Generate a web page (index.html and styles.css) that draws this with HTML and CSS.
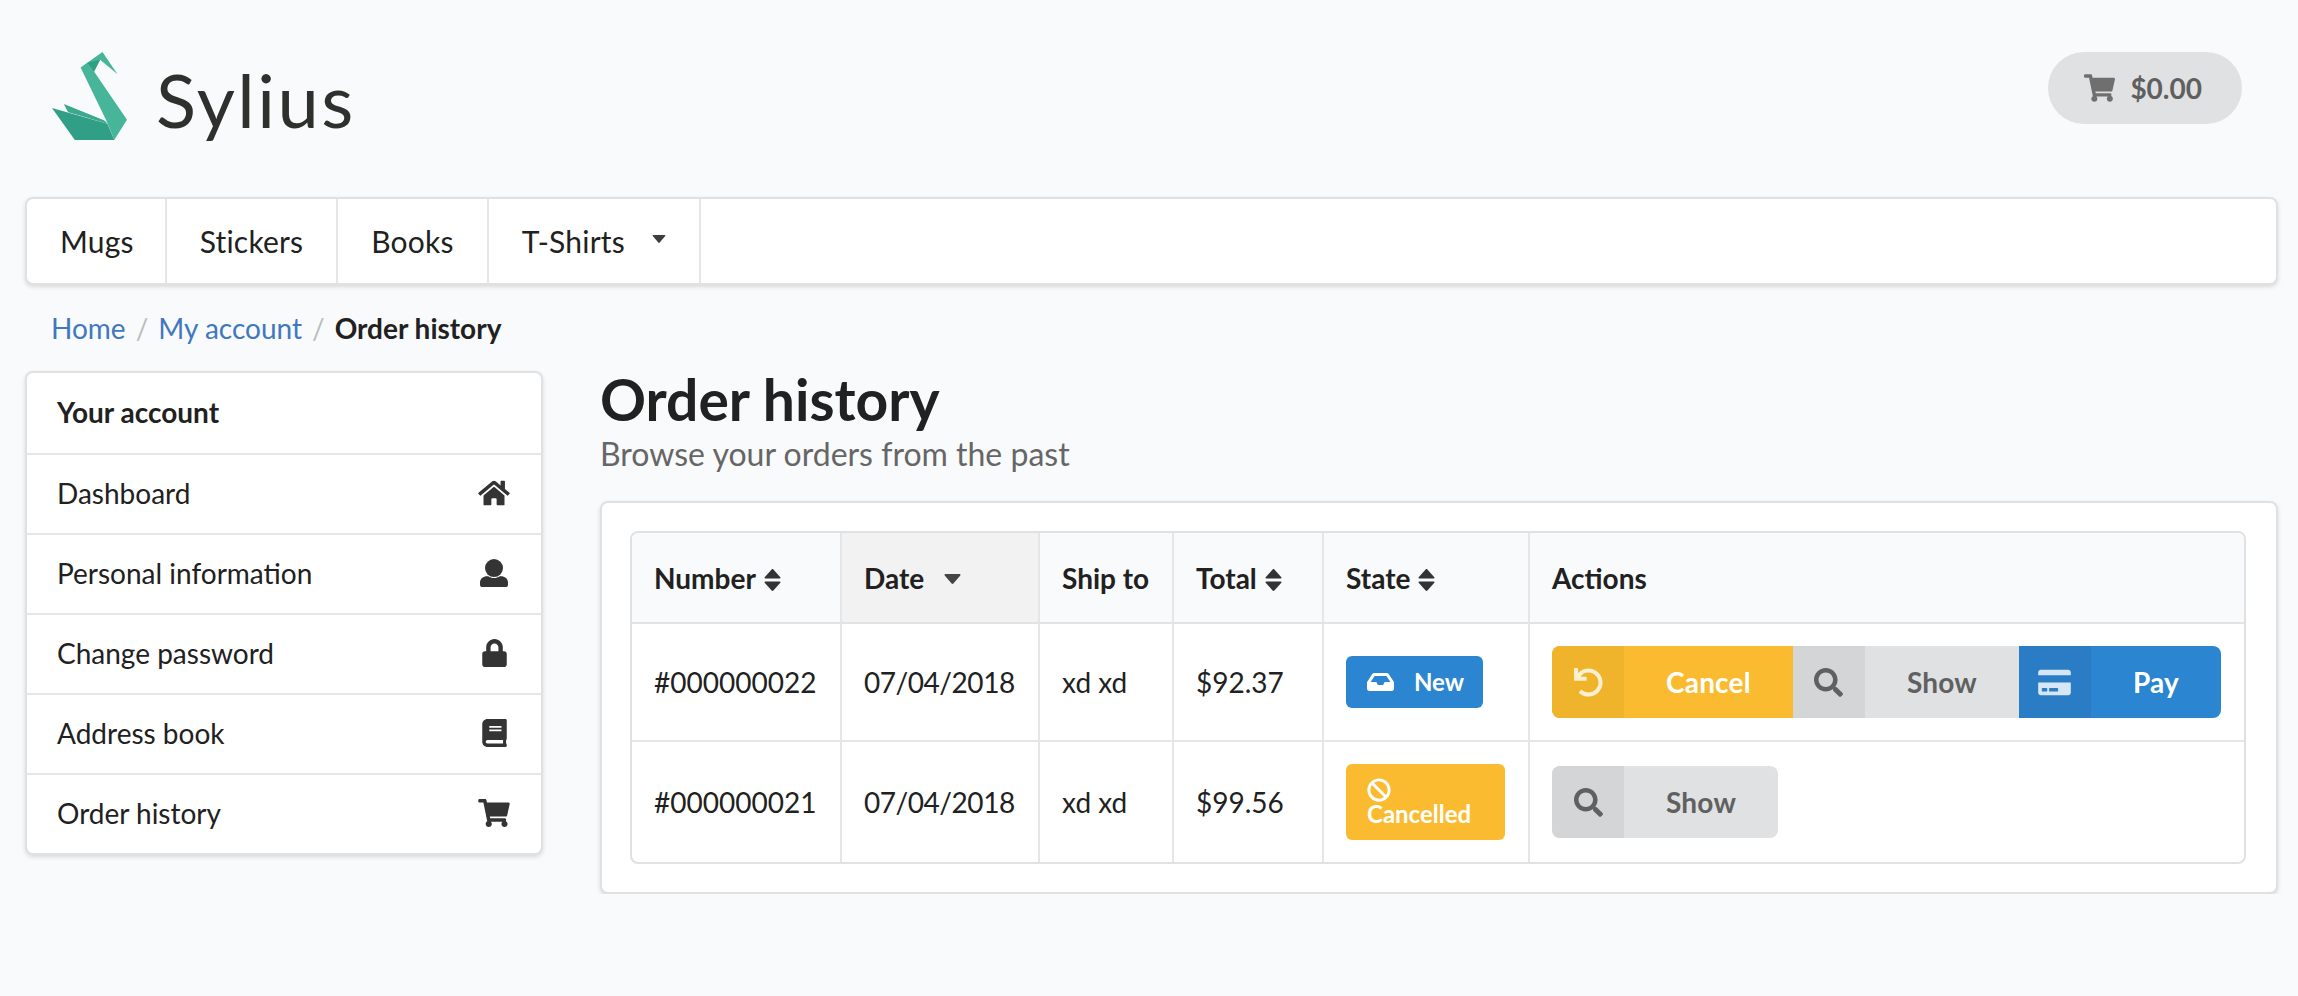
FILE: index.html
```html
<!DOCTYPE html>
<html lang="en">
<head>
<meta charset="utf-8">
<title>Order history</title>
<link rel="stylesheet" href="styles.css">
</head>
<body>
<svg class="sprite" aria-hidden="true">
<symbol id="i-home" viewBox="0 0 576 512"><path d="M280.37 148.26L96 300.11V464a16 16 0 0 0 16 16l112.06-.29a16 16 0 0 0 15.92-16V368a16 16 0 0 1 16-16h64a16 16 0 0 1 16 16v95.64a16 16 0 0 0 16 16.05L464 480a16 16 0 0 0 16-16V300L295.67 148.26a12.19 12.19 0 0 0-15.3 0zM571.6 251.47L488 182.56V44.05a12 12 0 0 0-12-12h-56a12 12 0 0 0-12 12v72.61L318.47 43a48 48 0 0 0-61 0L4.34 251.47a12 12 0 0 0-1.6 16.9l25.5 31A12 12 0 0 0 45.15 301l235.22-193.74a12.19 12.19 0 0 1 15.3 0L530.9 301a12 12 0 0 0 16.9-1.6l25.5-31a12 12 0 0 0-1.7-16.93z"/></symbol>
<symbol id="i-user" viewBox="0 0 512 512"><circle cx="256" cy="165" r="165"/><path d="M0 430c0-70 60-115 130-115h20c30 20 66 32 106 32s76-12 106-32h20c70 0 130 45 130 115v34a48 48 0 0 1-48 48H48a48 48 0 0 1-48-48z"/></symbol>
<symbol id="i-lock" viewBox="0 0 448 512"><path d="M400 224h-24v-72C376 68.2 307.8 0 224 0S72 68.2 72 152v72H48c-26.5 0-48 21.5-48 48v192c0 26.5 21.5 48 48 48h352c26.5 0 48-21.5 48-48V272c0-26.5-21.5-48-48-48zm-104 0H152v-72c0-39.7 32.3-72 72-72s72 32.3 72 72v72z"/></symbol>
<symbol id="i-book" viewBox="0 0 448 512"><path d="M448 360V24c0-13.3-10.7-24-24-24H96C43 0 0 43 0 96v320c0 53 43 96 96 96h328c13.3 0 24-10.7 24-24v-16c0-7.5-3.5-14.3-8.9-18.7-4.2-15.4-4.2-59.3 0-74.7 5.4-4.3 8.9-11.1 8.9-18.6zM128 134c0-3.3 2.7-6 6-6h212c3.3 0 6 2.7 6 6v20c0 3.3-2.7 6-6 6H134c-3.3 0-6-2.7-6-6v-20zm0 64c0-3.3 2.7-6 6-6h212c3.3 0 6 2.7 6 6v20c0 3.3-2.7 6-6 6H134c-3.3 0-6-2.7-6-6v-20zm253.4 250H96c-17.7 0-32-14.3-32-32 0-17.6 14.4-32 32-32h285.4c-1.9 17.1-1.9 46.9 0 64z"/></symbol>
<symbol id="i-cart" viewBox="0 0 576 512"><path d="M528.12 301.319l47.273-208C578.806 78.301 567.391 64 551.99 64H159.208l-9.166-44.81C147.758 8.021 137.93 0 126.529 0H24C10.745 0 0 10.745 0 24v16c0 13.255 10.745 24 24 24h69.883l70.248 343.435C147.325 417.1 136 435.222 136 456c0 30.928 25.072 56 56 56s56-25.072 56-56c0-15.674-6.447-29.835-16.824-40h209.647C430.447 426.165 424 440.326 424 456c0 30.928 25.072 56 56 56s56-25.072 56-56c0-22.172-12.888-41.332-31.579-50.405l5.517-24.276c3.413-15.018-8.002-29.319-23.403-29.319H218.117l-6.545-32h293.145c11.206 0 20.92-7.754 23.403-18.681z"/></symbol>
<symbol id="i-search" viewBox="0 0 512 512"><path d="M505 442.7L405.3 343c-4.5-4.5-10.6-7-17-7H372c27.6-35.3 44-79.7 44-128C416 93.1 322.9 0 208 0S0 93.1 0 208s93.1 208 208 208c48.3 0 92.7-16.4 128-44v16.3c0 6.4 2.5 12.5 7 17l99.7 99.7c9.4 9.4 24.6 9.4 33.9 0l28.3-28.3c9.4-9.4 9.4-24.6.1-34zM208 336c-70.7 0-128-57.2-128-128 0-70.7 57.2-128 128-128 70.7 0 128 57.2 128 128 0 70.7-57.2 128-128 128z"/></symbol>
<symbol id="i-undo" viewBox="0 0 512 512"><path d="M212.333 224.333H12c-6.627 0-12-5.373-12-12V12C0 5.373 5.373 0 12 0h48c6.627 0 12 5.373 12 12v78.112C117.773 39.279 184.26 7.47 258.175 8.007c136.906.994 246.448 111.623 246.157 248.532C504.041 393.258 393.12 504 256.333 504c-64.089 0-122.496-24.313-166.51-64.215-5.099-4.622-5.334-12.554-.467-17.42l33.967-33.967c4.474-4.474 11.662-4.717 16.401-.525C170.76 415.336 211.58 432 256.333 432c97.268 0 176-78.716 176-176 0-97.267-78.716-176-176-176-58.496 0-110.28 28.476-142.274 72.333h98.274c6.627 0 12 5.373 12 12v48c0 6.627-5.373 12-12 12z"/></symbol>
<symbol id="i-card" viewBox="0 0 576 512"><path d="M0 432c0 26.5 21.5 48 48 48h480c26.5 0 48-21.5 48-48V256H0v176zm192-68c0-6.6 5.4-12 12-12h136c6.6 0 12 5.4 12 12v40c0 6.6-5.4 12-12 12H204c-6.6 0-12-5.4-12-12v-40zm-128 0c0-6.6 5.4-12 12-12h72c6.6 0 12 5.4 12 12v40c0 6.6-5.4 12-12 12H76c-6.6 0-12-5.4-12-12v-40zM576 80v48H0V80c0-26.5 21.5-48 48-48h480c26.5 0 48 21.5 48 48z"/></symbol>
<symbol id="i-inbox" viewBox="0 0 576 512"><path d="M567.938 243.908L462.25 85.374A48.003 48.003 0 0 0 422.311 64H153.689a48 48 0 0 0-39.938 21.374L8.062 243.908A47.994 47.994 0 0 0 0 270.533V400c0 26.51 21.49 48 48 48h480c26.51 0 48-21.49 48-48V270.533a47.994 47.994 0 0 0-8.062-26.625zM162.252 128h251.497l85.333 128H376l-32 64H232l-32-64H76.918l85.334-128z"/></symbol>
<symbol id="i-ban" viewBox="0 0 512 512"><path d="M256 8C119.034 8 8 119.033 8 256s111.034 248 248 248 248-111.034 248-248S392.967 8 256 8zm130.108 117.892c65.448 65.448 70 165.481 20.677 235.637L150.47 105.216c70.204-49.356 170.226-44.735 235.638 20.676zM125.892 386.108c-65.448-65.448-70-165.481-20.677-235.637L361.53 406.784c-70.203 49.356-170.226 44.736-235.638-20.676z"/></symbol>
<symbol id="i-sort" viewBox="0 0 17 22"><path d="M7.6 .5c.5-.6 1.3-.6 1.8 0l6.9 7.7c.5.6.1 1.4-.7 1.4H1.4c-.8 0-1.2-.8-.7-1.4zM1.4 12.4h14.2c.8 0 1.2.8.7 1.4l-6.9 7.7c-.5.6-1.3.6-1.8 0L.7 13.8c-.5-.6-.1-1.4.7-1.4z"/></symbol>
<symbol id="i-down" viewBox="0 0 17 10"><path d="M1.4 0h14.2c.8 0 1.2.8.7 1.4L9.4 9.5c-.5.6-1.3.6-1.8 0L.7 1.4C.2.8.6 0 1.4 0z"/></symbol>
</svg>

<div class="page">
  <header class="top">
    <a class="brand" href="#">
      <svg class="swan" viewBox="67 67 223 261" aria-hidden="true">
        <polygon fill="#47b599" points="152,113 217,67 262,133 210,90 192,125 290,268 252,328 232,278 222,270 103,222 115,245 180,262 232,278"/>
        <polygon fill="#2f9f84" points="172,99 210,90 192,125"/>
        <polygon fill="#3aa98e" points="103,222 222,270 232,280 115,245"/>
        <polygon fill="#319f85" points="67,233 232,280 252,328 135,328"/>
      </svg>
      <span class="wordmark">Sylius</span>
    </a>
    <a class="cart" href="#"><svg class="ico-cart"><use href="#i-cart"/></svg>$0.00</a>
  </header>

  <nav class="menu">
    <a class="menu-item" href="#">Mugs</a>
    <a class="menu-item" href="#">Stickers</a>
    <a class="menu-item" href="#">Books</a>
    <a class="menu-item" href="#">T-Shirts<svg class="menu-caret"><use href="#i-down"/></svg></a>
  </nav>

  <div class="crumbs">
    <a href="#">Home</a><span class="sep">/</span><a href="#">My account</a><span class="sep">/</span><strong>Order history</strong>
  </div>

  <div class="columns">
    <aside class="side">
      <div class="side-head">Your account</div>
      <a class="side-item" href="#">Dashboard<span class="side-ico"><svg class="i-wide"><use href="#i-home"/></svg></span></a>
      <a class="side-item" href="#">Personal information<span class="side-ico"><svg class="i-user"><use href="#i-user"/></svg></span></a>
      <a class="side-item" href="#">Change password<span class="side-ico"><svg class="i-narrow"><use href="#i-lock"/></svg></span></a>
      <a class="side-item" href="#">Address book<span class="side-ico"><svg class="i-narrow"><use href="#i-book"/></svg></span></a>
      <a class="side-item" href="#">Order history<span class="side-ico"><svg class="i-wide"><use href="#i-cart"/></svg></span></a>
    </aside>

    <main class="main">
      <h1 class="title">Order history</h1>
      <p class="subtitle">Browse your orders from the past</p>
      <section class="panel">
        <table class="orders">
          <colgroup>
            <col class="c-num"><col class="c-date"><col class="c-ship"><col class="c-total"><col class="c-state"><col class="c-act">
          </colgroup>
          <thead>
            <tr>
              <th>Number<svg class="sort"><use href="#i-sort"/></svg></th>
              <th class="sorted">Date<svg class="sort-down"><use href="#i-down"/></svg></th>
              <th>Ship to</th>
              <th>Total<svg class="sort"><use href="#i-sort"/></svg></th>
              <th>State<svg class="sort"><use href="#i-sort"/></svg></th>
              <th>Actions</th>
            </tr>
          </thead>
          <tbody>
            <tr class="row-a">
              <td>#000000022</td>
              <td class="date">07/04/2018</td>
              <td>xd xd</td>
              <td>$92.37</td>
              <td><span class="tag tag-blue"><svg class="tag-ico"><use href="#i-inbox"/></svg>New</span></td>
              <td>
                <div class="btns">
                  <a class="btn btn-orange" href="#"><span class="btn-ico"><svg><use href="#i-undo"/></svg></span><span class="btn-txt">Cancel</span></a>
                  <a class="btn btn-gray" href="#"><span class="btn-ico"><svg><use href="#i-search"/></svg></span><span class="btn-txt">Show</span></a>
                  <a class="btn btn-blue" href="#"><span class="btn-ico"><svg class="wide"><use href="#i-card"/></svg></span><span class="btn-txt">Pay</span></a>
                </div>
              </td>
            </tr>
            <tr class="row-b">
              <td>#000000021</td>
              <td class="date">07/04/2018</td>
              <td>xd xd</td>
              <td>$99.56</td>
              <td><span class="tag tag-orange tag-wrap"><svg class="tag-ico ban"><use href="#i-ban"/></svg>Cancelled</span></td>
              <td>
                <div class="btns">
                  <a class="btn btn-gray" href="#"><span class="btn-ico"><svg><use href="#i-search"/></svg></span><span class="btn-txt">Show</span></a>
                </div>
              </td>
            </tr>
          </tbody>
        </table>
      </section>
    </main>
  </div>
</div>
</body>
</html>
```

FILE: styles.css
```css
* { box-sizing: border-box; }
html, body { margin: 0; padding: 0; }
body {
  background: #f9fafb;
  color: #212121;
  font-family: Lato, "Liberation Sans", sans-serif;
  font-size: 28px;
  line-height: 40px;
}
a { color: inherit; text-decoration: none; }
svg { fill: currentColor; }
.sprite { display: none; }

.page { padding: 52px 20px 0 25px; }

.top { display: flex; justify-content: space-between; align-items: flex-start; height: 88px; }
.brand { display: flex; align-items: flex-start; padding-left: 27px; }
.swan { display: block; width: 75px; height: 88px; }
.wordmark { margin-left: 29px; margin-top: 6px; font-size: 74px; line-height: 84px; letter-spacing: 2.5px; color: #2f2f2d; }
.cart {
  display: flex; align-items: center;
  height: 72px; margin-right: 36px; padding: 0 40px 0 36px;
  border-radius: 36px; background: #e0e1e2; color: #5f5f5f;
  font-weight: 700; font-size: 28px;
}
.ico-cart { width: 31px; height: 28px; margin-right: 15px; color: #6f6f6f; }

.menu {
  display: flex; height: 88px; margin-top: 57px;
  background: #fff; border: 2px solid #e0e1e2; border-radius: 8px;
  box-shadow: 0 2px 4px rgba(34,36,38,.15);
  font-size: 30px; letter-spacing: .2px;
}
.menu-item {
  display: flex; align-items: center; padding: 0 33px;
  border-right: 2px solid #e6e6e7;
}
.menu-item:first-child { padding-right: 31px; }
.menu-caret { width: 14px; height: 8px; margin: -4px 0 0 27px; color: #3d3d3d; }

.crumbs { margin-top: 23px; padding-left: 26px; height: 40px; color: #212121; }
.crumbs a { color: #4078c0; }
.crumbs strong { font-weight: 700; }
.sep { margin: 0 10px; color: #bdbdbd; }

.columns { display: flex; align-items: flex-start; margin-top: 23px; }
.side {
  flex: none; width: 518px; margin-right: 57px;
  background: #fff; border: 2px solid #e0e1e2; border-radius: 8px;
  box-shadow: 0 2px 4px rgba(34,36,38,.15);
}
.side-head { display: flex; align-items: center; height: 80px; padding: 0 31px 3px 30px; font-weight: 700; }
.side-item {
  display: flex; align-items: center; justify-content: space-between;
  height: 80px; padding: 0 31px 3px 30px;
  border-top: 2px solid #e6e6e7;
}
.side-ico { display: flex; justify-content: center; width: 32px; color: #343434; }
.i-wide { width: 32px; height: 28px; }
.i-narrow { width: 25px; height: 28px; }
.i-user { width: 28px; height: 28px; }

.main { flex: 1; min-width: 0; }
.title { margin: 0; font-size: 57px; line-height: 56px; font-weight: 700; color: #212121; }
.subtitle { margin: 7px 0 0; font-size: 32px; line-height: 40px; color: #666; }
.panel {
  margin-top: 27px; padding: 28px 30px 28px 28px;
  background: #fff; border: 2px solid #e0e1e2; border-radius: 8px;
  box-shadow: 0 2px 4px rgba(34,36,38,.15);
}

.orders {
  width: 100%; table-layout: fixed;
  border-collapse: separate; border-spacing: 0;
  border: 2px solid #e0e1e2; border-radius: 8px;
}
.c-num { width: 208px; }
.c-date { width: 198px; }
.c-ship { width: 134px; }
.c-total { width: 150px; }
.c-state { width: 206px; }
.orders th, .orders td {
  padding: 0 22px; text-align: left; vertical-align: middle;
  border-left: 2px solid #e6e6e7;
}
.orders th:first-child, .orders td:first-child { border-left: 0; }
.orders th {
  height: 91px; background: #f9fafb; font-weight: 700;
  border-bottom: 2px solid #e3e3e4;
}
.orders th:first-child { border-top-left-radius: 6px; }
.orders th:last-child { border-top-right-radius: 6px; }
.orders th.sorted { background: #f2f2f2; }
.orders td.date { letter-spacing: -.45px; }
.row-a td { height: 118px; border-bottom: 2px solid #e6e6e7; }
.row-b td { height: 120px; }
.sort { width: 17px; height: 22px; margin-left: 8px; vertical-align: -2px; color: #333; }
.sort-down { width: 17px; height: 10px; margin-left: 20px; vertical-align: 5px; color: #444; }

.tag {
  display: inline-block; padding: 14px 19px 14px 21px;
  border-radius: 6px; color: #fff;
  font-size: 24px; font-weight: 700; line-height: 24px;
}
.tag-blue { background: #2b85d0; }
.tag-orange { background: #fbbb30; }
.tag-wrap { width: 159px; vertical-align: middle; }
.tag-ico { width: 27px; height: 24px; margin-right: 20px; vertical-align: -3px; }
.ban { display: block; width: 24px; height: 24px; margin-right: 0; }

.btns { display: flex; }
.btn {
  display: flex; align-items: stretch; height: 72px;
  font-weight: 700; line-height: 72px;
}
.btn:first-child { border-top-left-radius: 8px; border-bottom-left-radius: 8px; }
.btn:last-child { border-top-right-radius: 8px; border-bottom-right-radius: 8px; }
.btn:first-child .btn-ico { border-top-left-radius: 8px; border-bottom-left-radius: 8px; }
.btn-ico { display: flex; align-items: center; justify-content: center; width: 72px; }
.btn-ico svg { width: 29px; height: 29px; }
.btn-ico svg.wide { width: 33px; }
.btn-txt { padding: 0 42px; letter-spacing: .2px; }
.btn-orange { background: #fbbb30; color: #fff; }
.btn-orange .btn-ico { background: #efb42c; color: #fff1d0; }
.btn-gray { background: #e0e1e2; color: #606060; }
.btn-gray .btn-ico { background: #d4d5d6; color: #606060; }
.btn-blue { background: #2b85d0; color: #fff; }
.btn-blue .btn-ico { background: #2a7dc4; color: #d5e7f6; }
```
